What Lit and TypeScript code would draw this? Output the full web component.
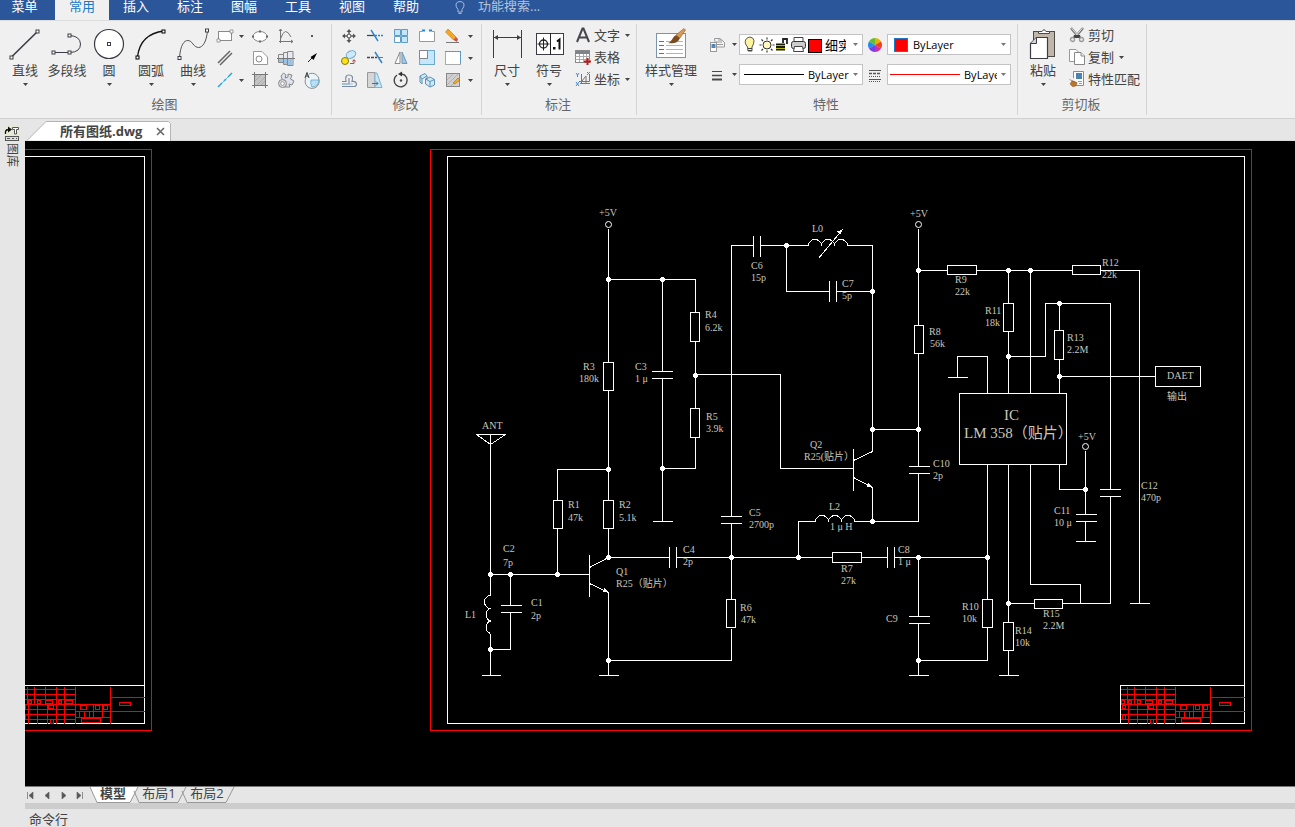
import { LitElement, html, svg, css } from "lit";
import { customElement, state } from "lit/decorators.js";
import { classMap } from "lit/directives/class-map.js";

const INK = "#3c3c46";

/* ---------- icon artwork ---------- */

const node = (x: number, y: number, c = INK) =>
  svg`<rect x=${x - 1.5} y=${y - 1.5} width="3" height="3" fill="#fff" stroke=${c}></rect>`;

const big: Record<string, unknown> = {
  line: svg`<path d="M3 28.5L29 3" stroke=${INK} stroke-width="1.6"/>${node(2.5, 29.5)}${node(28.5, 3.5)}`,
  polyline: svg`<path d="M2.5 24.500H19Q29.500 24 29.500 16Q29 8 18.500 7.500" fill="none" stroke=${INK}/>${node(2.5, 24.5)}${node(18.5, 24.5)}${node(18.5, 7.5)}`,
  circle: svg`<circle cx="16" cy="16" r="14.500" fill="#fff" stroke=${INK} stroke-width="1.200"/>${node(16, 16)}`,
  arc: svg`<path d="M2.500 29Q5 6 29 3" fill="none" stroke="#111" stroke-width="1.300"/>${node(2.5, 29.5, "#000")}${node(28.5, 3.5, "#000")}`,
  curve: svg`<path d="M2.500 29.500C4 10 12 10 16 16C21 23 29 20 30.500 2.500" fill="none" stroke="#555"/>${node(2.5, 30)}${node(30, 2.5)}`,
  dimension: svg`<path d="M2.500 2V30M30.500 2V30M3 9.500H30" stroke=${INK} fill="none"/><path d="M3 9.500l4-2.500v5zM30 9.500l-4-2.500v5z" fill=${INK}/>`,
  symbol: svg`<rect x="3.500" y="5.500" width="27" height="21" fill="#fff" stroke=${INK}/><path d="M17.500 5V27M4.500 16H16.500M10.500 9.500V22.500" stroke="#222"/><circle cx="10.500" cy="16" r="4" fill="none" stroke="#222" stroke-width="1.300"/><rect x="20" y="19" width="2.500" height="2.500" fill="#111"/><path d="M24 13.500L26.500 11.500V21.500" fill="none" stroke="#111" stroke-width="2"/>`,
  style: svg`<rect x="1.500" y="5.500" width="29" height="24" fill="#fff" stroke="#7b93ad"/><path d="M4 13.500h5M4 17.500h5M4 21.500h5M4 25.500h5" stroke="#5674a0"/><path d="M11 13.500h17M11 17.500h17M11 21.500h17M11 25.500h17" stroke="#a9b5cf"/><path d="M13 15C17 14 17 9 21 7L25 10C23 15 18 16 13 15z" fill="#7c4a1c"/><path d="M21 7L29 0.500L30.500 2L25 10z" fill="#d99a56" stroke="#8a5a2a" stroke-width=".6"/>`,
  paste: svg`<rect x="6.500" y="3.500" width="21" height="25" fill="#c0b7aa" stroke="#4a4a4a"/><path d="M11.500 5.500V3.500H15Q17 0 19 3.500H22.500V5.500z" fill="#fff" stroke="#4a4a4a"/><path d="M9.500 9.500H20.500V30.500H3.500V15.500z" fill="#fff" stroke=${INK} stroke-width="1.200"/><path d="M9.500 9.500V15.500H3.500" fill="#d4d4d4" stroke=${INK}/>`,
};

const small: Record<string, unknown> = {
  rect: svg`<rect x="2.500" y="4.500" width="13" height="9" fill="#fff" stroke="#8a8a8a"/><path d="M1 12h3v3H1zM14 3h3v3h-3z" fill="#fff" stroke="#777" stroke-width=".7"/>`,
  ellipse: svg`<ellipse cx="9" cy="9.500" rx="7" ry="5" fill="#fff" stroke="#888"/><path d="M8 3.500h2v2H8zM1 8.500h2v2H1zM15 8.500h2v2h-2zM8 13.500h2v2H8z" fill="#666"/>`,
  graph: svg`<path d="M3.500 2V16M2 14.500H16M3.500 12Q8 -2 14 10M2 4l1.500-2L5 4M14 13l2 1.500-2 1.500" fill="none" stroke="#777"/>`,
  dot: svg`<rect x="8" y="8" width="2" height="2" fill="#555"/>`,
  dblline: svg`<path d="M2 14L14 2M4 16L16 4" stroke="#666" stroke-width="1.500"/>`,
  sheet: svg`<path d="M2.500 2.500H11L16.500 8V15.500H2.500z" fill="#fff" stroke="#999"/><circle cx="8" cy="10" r="3" fill="#fff" stroke="#888"/>`,
  shaft: svg`<path d="M1.500 5.500h5v8h-5zM6.500 3.500h4v12h-4zM10.500 2.500h5.500v14h-5.500z" fill="#e7eaf0" stroke="#888"/><path d="M2 10h4v3H2zM7 10h3v5H7zM11 10h4.500v6H11z" fill="#9cc3e6"/><path d="M0 9.500H18" stroke="#777"/>`,
  arrow: svg`<path d="M5 13L12 6" stroke="#222"/><path d="M14 4L7.500 8L10.500 11z" fill="#000"/>`,
  center: svg`<path d="M2 16L6 12M8 10L10 8M12 6L16 2" stroke="#29a6dc" stroke-width="1.500"/><path d="M6 12L8 10M10 8L12 6" stroke="#29a6dc" stroke-width=".7"/>`,
  hatch: svg`<rect x="3.500" y="3.500" width="11" height="11" fill="#c4c4c4"/><path d="M4 10l6-6M6 14l8-8M4 6l2-2M10 14l4-4" stroke="#a2a2a2" stroke-width=".8"/><path d="M3.500 1V17M14.500 1V17M1 3.500H17M1 14.500H17" stroke="#777"/>`,
  gear: svg`<path d="M5 8L4 5L6.500 2L9 4L8 7L11 6V3L15 4L13.500 8L17 10L15 14L12 13L13 16H7L9 13" fill="#dce3ee" stroke="#888"/><circle cx="5.500" cy="12.500" r="4" fill="#dcdcdc" stroke="#888"/><circle cx="5.500" cy="12.500" r="1.800" fill="#fff" stroke="#999"/>`,
  detail: svg`<path d="M6 3A7 7 0 0 1 16 9A7 7 0 1 1 3 7" fill="#eaf5fb" stroke="#888"/><path d="M8 9H16Q15 16 9 16Q7 13 8 9z" fill="#b9e1f5" stroke="#5a9ac0" stroke-width=".7"/><path d="M2 7L4 1.500L6 7M3 5H5" fill="none" stroke="#333"/>`,
  move: svg`<path d="M9 4V7M9 11V14M4 9H7M11 9H14" stroke="#555" stroke-width="1.500"/><path d="M9 2l2.500 3h-5zM9 16l2.500-3h-5zM2 9l3-2.500v5zM16 9l-3-2.500v5z" fill="#555"/><rect x="7.500" y="7.500" width="3" height="3" fill="#fff" stroke="#777"/>`,
  trim: svg`<path d="M1 8.500H8" stroke="#444" stroke-width="1.300"/><path d="M9 8.500H17" stroke="#2c86c9" stroke-width="1.300" stroke-dasharray="2 1"/><path d="M5 3L12 14" stroke="#2c86c9" stroke-width="1.400"/>`,
  array: svg`<path d="M2.500 2.500h6v6h-6zM9.500 2.500h6v6h-6zM9.500 9.500h6v6h-6z" fill="#c4e6fa" stroke="#5f9dc8"/><path d="M2.500 9.500h6v6h-6z" fill="#fff" stroke="#5f9dc8"/>`,
  stretch: svg`<path d="M4 4.500H1.500V14.500H16.500V4.500H14" fill="#fff" stroke="#999"/><path d="M4 3.500h3M11 3.500h3" stroke="#2c86c9" stroke-width="2"/>`,
  eraser: svg`<path d="M1.500 5L4 2L12 10L9.500 13z" fill="#f5a623" stroke="#b87817" stroke-width=".6"/><path d="M9.500 13L12 10L14 12L13 15z" fill="#c9534f"/><path d="M2 15.500H15" stroke="#777"/>`,
  copy: svg`<ellipse cx="11" cy="5.500" rx="5" ry="3.500" transform="rotate(-25 11 5.500)" fill="#cdeafa" stroke="#6aa5cc"/><circle cx="5" cy="12" r="3.500" fill="#fbe21c" stroke="#8a7a00"/><path d="M10 14.500H14V11M12.500 12.500l1.500-2l1.500 2" fill="none" stroke="#b04a3a"/>`,
  extend: svg`<path d="M1 8.500H11" stroke="#444" stroke-dasharray="3 1" stroke-width="1.300"/><path d="M9 3L16 14" stroke="#2c86c9" stroke-width="1.500"/><path d="M12 8.500H17" stroke="#2c86c9"/>`,
  mirror: svg`<path d="M8 3V14.500H3z" fill="#fff" stroke="#888"/><path d="M10 3V14.500H15z" fill="#9bc7e8" stroke="#6d98b8"/>`,
  scale: svg`<rect x="1.500" y="1.500" width="15" height="14" fill="#c4e8fb" stroke="#6fa9cc"/><rect x="1.500" y="1.500" width="8" height="8" fill="#fff" stroke="#888"/>`,
  select: svg`<rect x="1.500" y="2.500" width="15" height="13" fill="#fff" stroke="#aaa"/><path d="M1.500 2.500H16.500V15" fill="none" stroke="#3c93cc" stroke-dasharray="2 1"/>`,
  offset: svg`<path d="M2 15.500H14Q16.500 15.500 16.500 13Q16 10 12 10.500Q14 4 9 4Q4.500 4 6 10.500H2M2 13H9V7" fill="none" stroke="#7c8aa0" stroke-width="1.200"/><path d="M2 13H13" stroke="#8cc4e8"/>`,
  chamfer: svg`<path d="M1.500 1.500H9V16.500H1.500z" fill="#d6d6d6" stroke="#999"/><path d="M9 2H11L16 16.500H9z" fill="#c4e8fb" stroke="#7ab3d3"/><path d="M6 12.500H12M10 10.500l2 2l-2 2" fill="none" stroke="#666"/>`,
  rotate: svg`<path d="M10 3A6.500 6.500 0 1 1 5 4" fill="none" stroke="#444" stroke-width="1.400"/><path d="M10 0.500V5.500L6 3z" fill="#333"/><circle cx="9" cy="9.500" r="1.200" fill="#444"/>`,
  block: svg`<path d="M2 5L7 2.500L9 5L4 8zM2 5V11L4 13V8M9 5V9M7.500 8L12 6L16.500 8.500V14L12 16L7.500 13z" fill="#cfe9f8" stroke="#5a93b8"/><path d="M7.500 8L12 10.500L16.500 8.500M12 10.500V16" fill="none" stroke="#5a93b8"/>`,
  edit: svg`<rect x="2.500" y="2.500" width="13" height="13" fill="#d0d0d0" stroke="#888"/><path d="M3 9l6-6M3 14l11-11M7 15l8-8" stroke="#b0b0b0"/><path d="M9 12L14 7L16 9L11 13z" fill="#f0a831" stroke="#8f6417" stroke-width=".5"/>`,
  letter: svg`<path d="M3 16L8.500 2.500H9.500L15 16M5 11.500H13" fill="none" stroke="#46464e" stroke-width="2"/>`,
  table: svg`<rect x="1.500" y="2.500" width="14" height="12" fill="#fff" stroke="#888"/><path d="M1.500 3h14v3h-14z" fill="#7e848e"/><path d="M1.500 8.500h14M1.500 11.500h14M5.500 6v8M9.500 6v8M12.500 6v8" stroke="#aaa"/><path d="M13.500 10V17M10 13.500H17" stroke="#b81c1c" stroke-width="2"/>`,
  coord: svg`<path d="M7.500 4V14M5 11.500H15.500V5M8 11L12 6V14M6 13.500H16" fill="none" stroke="#777"/><path d="M2 3l1.500 2L5 3M3.500 5v2M13 2l3 3M16 2l-3 3M2 12l3 4M5 12l-3 4" fill="none" stroke="#3f87c7"/>`,
  layers: svg`<path d="M6.500 2.500H12L16.500 6.500V11H8z" fill="#f4f4f4" stroke="#999"/><path d="M8 6h6M9 8.500h6M10 4h4" stroke="#999"/><rect x="2.500" y="6.500" width="6" height="9" fill="#fff" stroke="#999"/><rect x="3.500" y="8" width="4" height="4" fill="#4d86b8"/>`,
  weight: svg`<path d="M4 5.500H14" stroke="#4a4a4a"/><path d="M4 9.500H14" stroke="#4a4a4a" stroke-width="1.500"/><path d="M4 13.500H14" stroke="#4a4a4a" stroke-width="2"/>`,
  wheel: svg`<circle cx="9" cy="9" r="7" fill="#ddd"/><path d="M9 9V2A7 7 0 0 1 15 5.500z" fill="#f0b000"/><path d="M9 9L15 5.500A7 7 0 0 1 15 12.500z" fill="#f04020"/><path d="M9 9L15 12.500A7 7 0 0 1 9 16z" fill="#d030a0"/><path d="M9 9V16A7 7 0 0 1 3 12.500z" fill="#7a3cf0"/><path d="M9 9L3 12.500A7 7 0 0 1 3 5.500z" fill="#1e8cf0"/><path d="M9 9L3 5.500A7 7 0 0 1 9 2z" fill="#60c030"/>`,
  linetype: svg`<path d="M3 4.500H15M3 13.500H15" stroke="#555"/><path d="M3 7.500H15" stroke="#555" stroke-width="1.500" stroke-dasharray="3 1"/><path d="M3 10.500H15M3 15.500H15" stroke="#555" stroke-dasharray="1 1"/>`,
  cut: svg`<path d="M3 2L11 11.500M15 2L7 11.500" stroke="#777" stroke-width="2.500"/><path d="M3.500 2L11 11M14.500 2L7 11" stroke="#fff" stroke-width=".8"/><path d="M6 9h6l1 3H5z" fill="#444"/><circle cx="4.500" cy="13.500" r="2" fill="#eee" stroke="#999" stroke-width="1.300"/><circle cx="13.500" cy="13.500" r="2" fill="#eee" stroke="#999" stroke-width="1.300"/>`,
  pages: svg`<path d="M1.500 1.500H8L11.500 5V13.500H1.500z" fill="#fff" stroke="#999"/><path d="M6.500 4.500H13L16.500 8V16.500H6.500z" fill="#fff" stroke="#888"/><path d="M13 4.500V8H16.500" fill="#eee" stroke="#888"/>`,
  match: svg`<path d="M5.500 1.500H15.500V15.500H8M5.500 1.500V8" fill="#fff" stroke="#8a8a8a"/><rect x="8" y="3" width="6" height="6" fill="#4b83b3"/><path d="M10 11.500h4M11 13.500h3" stroke="#999"/><path d="M1.500 9.500L7 12M2 14L4 11L9 12.500Q9 17 4.500 16.500z" fill="#bd7428" stroke="#8a5a2a" stroke-width=".6"/>`,
};

const bigIcon = (n: string) =>
  html`<svg class="big-icon" viewBox="0 0 32 32" aria-hidden="true">${big[n]}</svg>`;
const smallIcon = (n: string) =>
  html`<svg class="small-icon" viewBox="0 0 18 18" aria-hidden="true">${small[n]}</svg>`;
const caret = html`<svg class="caret" viewBox="0 0 5 3" aria-hidden="true"><path d="M0 0H5L2.500 3z" fill="currentColor"/></svg>`;

/* ---------- drawing sheet data ---------- */

const WIRES = [
  // supply rail, bias network
  "M608 228V362M608 390V500M608 528V557M608 279H695V312M695 341V408M695 437V468H662",
  "M662 279V371M662 378V521M652 521H672M651 371H672M651 378H672",
  "M695 374H780V468H853M608 469H557V500M557 528V574",
  // antenna and input tank
  "M476 434H505L490 444L476 434M490 434V595M490 633V675M481 675H500M490 574H589",
  "M510 574V605M510 612V649H490M500 605H521M500 612H521",
  // first transistor
  "M589 554V596M589 567L608 557M589 583L608 592V675M598 675H618M608 660H731V628",
  "M608 557H669M669 546V567M676 546V567M676 557H832M731 557V599M731 557V523M720 523H741M720 516H741M731 516V245H753",
  // oscillator tank
  "M753 235V256M760 235V256M760 245H808M847 245H872V451L853 460M786 245V291H829M829 280V301M836 280V301M836 291H872",
  "M853 448V490M853 477L872 487V521M854 521H918V473M815 521H798V557M818 258L842 229",
  "M872 429H918M918 228V325M918 353V466M908 466H929M908 473H929",
  "M861 557H887M887 546V567M894 546V567M894 557H987M918 557V616M908 616H929M908 623H929M918 623V675M908 675H928M918 660H987V627",
  // amplifier
  "M918 270H947M976 270H1072M1100 270H1139V603M1129 603H1149M1008 270V303M1008 331V393M1030 270V393",
  "M1008 356H1045V303H1110V489M1059 303V330M1059 359V393M1059 376H1155M947 377H967M957 377V356H987V393",
  "M987 464V599M1008 464V622M1008 650V675M998 675H1018M1030 464V584H1080V603M1008 603H1034M1062 603H1110V496",
  "M1059 464V489H1085M1085 450V514M1075 514H1096M1075 521H1096M1085 521V541M1075 541H1095M1099 489H1120M1099 496H1120",
];

const COILS =
  "M490 595a6 6.500 0 0 0 0 13a6 6.500 0 0 0 0 12.500a6 6.500 0 0 0 0 12.500" +
  "M808 245a6.500 6 0 0 1 13 0a6.500 6 0 0 1 13 0a6.500 6 0 0 1 13 0" +
  "M815 521a6.500 6 0 0 1 13 0a6.500 6 0 0 1 13 0a6.500 6 0 0 1 13 0";

const BOXES: number[][] = [
  [690, 312, 9, 29], [690, 408, 9, 29], [603, 362, 10, 28], [603, 500, 10, 28], [553, 500, 9, 28],
  [726, 599, 9, 28], [914, 325, 9, 28], [832, 552, 29, 10], [947, 265, 29, 9], [1072, 265, 28, 9],
  [1003, 303, 10, 28], [1054, 330, 9, 29], [982, 599, 10, 28], [1003, 622, 10, 28], [1034, 599, 28, 9],
  [959, 393, 107, 71], [1155, 366, 45, 20],
];

const DOTS: number[][] = [
  [608, 279], [662, 279], [695, 375], [662, 468], [608, 469], [608, 557], [490, 574], [510, 574], [557, 574],
  [490, 649], [608, 660], [731, 557], [786, 245], [872, 291], [872, 429], [918, 429], [918, 270], [872, 521],
  [798, 557], [918, 557], [987, 557], [918, 660], [1008, 270], [1030, 270], [1008, 356], [1059, 303],
  [1059, 376], [1085, 489], [1008, 603],
];

const TERMINALS: number[][] = [[608, 224], [918, 224], [1085, 446]];

const LABELS: [number, number, string][] = [
  [600, 216, "+5V"], [706, 318, "R4"], [706, 331, "6.2k"], [584, 370, "R3"], [580, 382, "180k"],
  [636, 370, "C3"], [636, 382, "1 μ"], [483, 429, "ANT"], [707, 420, "R5"], [707, 432, "3.9k"],
  [504, 552, "C2"], [504, 566, "7p"], [569, 508, "R1"], [569, 521, "47k"], [620, 508, "R2"],
  [620, 521, "5.1k"], [750, 516, "C5"], [750, 528, "2700p"], [684, 553, "C4"], [684, 565, "2p"],
  [617, 575, "Q1"], [617, 587, "R25（贴片）"], [466, 618, "L1"], [532, 606, "C1"], [532, 619, "2p"],
  [741, 611, "R6"], [742, 623, "47k"], [813, 232, "L0"], [752, 269, "C6"], [752, 281, "15p"],
  [843, 287, "C7"], [843, 299, "5p"], [911, 217, "+5V"], [930, 335, "R8"], [931, 347, "56k"],
  [956, 283, "R9"], [956, 295, "22k"], [986, 314, "R11"], [986, 326, "18k"], [1103, 266, "R12"],
  [1103, 278, "22k"], [1068, 341, "R13"], [1068, 353, "2.2M"], [1168, 400, "输出"], [1079, 440, "+5V"],
  [1142, 489, "C12"], [1142, 501, "470p"], [1055, 514, "C11"], [1055, 526, "10 μ"], [811, 448, "Q2"],
  [805, 460, "R25(贴片）"], [830, 510, "L2"], [831, 530, "1 μ H"], [899, 553, "C8"], [899, 565, "1 μ"],
  [842, 572, "R7"], [842, 584, "27k"], [887, 622, "C9"], [963, 610, "R10"], [963, 622, "10k"],
  [1016, 634, "R14"], [1016, 646, "10k"], [1044, 617, "R15"], [1044, 629, "2.2M"], [934, 467, "C10"],
  [934, 479, "2p"],
];

const TITLE_GRID =
  "M20 689H75M20 694H75M20 699H75M20 704H110M20 709H75M20 714H75M20 719H75" +
  "M27 686V704M34 686V704M45 686V704M56 686V723M64 686V723M75 686V723M28 704V723M37 704V723M47 704V723" +
  "M75 711H110M75 717H110M79 711V717M84 711V717M89 711V717M93 704V717M102 704V717M110 686V723" +
  "M110 697H144M110 711H144" +
  "M21 700h3v3h-3zM28 700h3v3h-3zM37 700h3v3h-3zM45 700h7v3h-7zM58 700h3v3h-3zM65 700h7v3h-7z" +
  "M22 705h3v3h-3zM48 705h5v3h-5zM80 705h6v4h-6zM95 705h4v4h-4zM103 705h4v4h-4z" +
  "M22 715h3v4h-3zM50 719h3v4h-3zM81 718h19v4h-19zM119 702h11v3h-11z";

const titleBlock = (dx: number) => svg`
  <g transform="translate(${dx} 0)">
    <path class="sheet" d="M20 723V685H144"/>
    <path class="red" d=${TITLE_GRID}/>
  </g>`;

@customElement("cad-canvas")
export class CadCanvas extends LitElement {
  static styles = css`
    :host { display: block; flex: 1; min-height: 0; background: #000; overflow: hidden; }
    svg { display: block; width: 100%; height: 100%; }
    .wire, .sheet, .red { fill: none; stroke: #fff; stroke-width: 1; shape-rendering: crispEdges; }
    .red { stroke: #f00; }
    .body { fill: #000; }
    .solid { fill: #fff; shape-rendering: crispEdges; }
    .terminal { fill: #000; stroke: #fff; }
    text {
      fill: #c8c8bc;
      font: 10px "Liberation Serif", "Noto Sans CJK SC", serif;
    }
    .large { font-size: 15px; }
  `;

  render() {
    return html`
      <svg role="img" aria-label="所有图纸">
        <g transform="translate(-24.500 -140.500)">
          <path class="red" d="M20 149H151V730H20M430 149H1251V730H430z"/>
          <path class="sheet" d="M20 156H144V723H20M447 156H1244V723H447z"/>
          ${titleBlock(0)}${titleBlock(1100)}
          ${WIRES.map((d) => svg`<path class="wire" d=${d}/>`)}
          <path class="wire" d=${COILS}/>
          ${BOXES.map(([x, y, w, h]) => svg`<rect class="wire body" x=${x} y=${y} width=${w} height=${h}/>`)}
          ${DOTS.map(([x, y]) => svg`<circle class="solid" cx=${x} cy=${y} r="2.500"/>`)}
          ${TERMINALS.map(([x, y]) => svg`<circle class="terminal" cx=${x} cy=${y} r="3"/>`)}
          <path class="solid" d="M608 592l-6-1l2-4zM872 487l-6-1l2-4zM842 229l-2 5l-4-3z"/>
        </g>
        <g transform="translate(-26 -141)">
          ${LABELS.map(([x, y, t]) => svg`<text x=${x} y=${y}>${t}</text>`)}
          <text x="1168" y="379">DAET</text>
          <text class="large" x="1005" y="420">IC</text>
          <text class="large" x="965" y="438">LM 358（贴片）</text>
        </g>
      </svg>`;
  }
}

@customElement("app-root")
export class AppRoot extends LitElement {
  @state() private menu = "常用";
  @state() private layout = "模型";

  static styles = css`
    :host {
      display: flex;
      flex-direction: column;
      height: 100vh;
      overflow: hidden;
      background: #e6e6e6;
      color: #444;
      font: 13px/16px "Open Sans", "Noto Sans CJK SC", sans-serif;
    }
    * { box-sizing: border-box; }
    button {
      border: 0;
      margin: 0;
      padding: 0;
      background: none;
      color: inherit;
      font: inherit;
      white-space: nowrap;
    }
    svg { display: block; flex: none; }

    .menubar { display: flex; flex: none; height: 20px; background: #2b579a; color: #fff; }
    .menubar button { width: 54px; height: 20px; line-height: 12px; padding-bottom: 8px; }
    .menubar button:first-child { width: 55px; padding-right: 6px; }
    .menubar button.active { background: #f0f0f0; color: #1979ca; }
    .search { display: flex; align-items: flex-start; margin-left: 19px; gap: 10px; color: #b5c3da; }
    .search input {
      width: 160px; height: 12px; border: 0; padding: 0; background: none;
      color: inherit; font: inherit; line-height: 12px; overflow: visible;
    }
    .search input::placeholder { color: #b5c3da; opacity: 1; }
    .bulb { width: 16px; height: 16px; }

    .ribbon {
      display: flex; flex: none; height: 99px; padding: 3px 0;
      background: #f0f0f0; border-top: 1px solid #dcdcdc; border-bottom: 1px solid #d0d0d0;
    }
    .group { display: flex; flex-direction: column; justify-content: space-between; border-right: 1px solid #d4d4d4; padding: 0 6px 3px 4px; }
    .group h2 { margin: 0; font: inherit; line-height: 16px; text-align: center; color: #666; }
    .tools { display: flex; }
    .big { display: flex; flex-direction: column; align-items: center; width: 42px; padding-top: 4px; }
    .big.wide { width: 60px; }
    .big span { margin-top: 1px; line-height: 18px; }
    .big .caret { margin-top: 4px; }
    .big-icon { width: 32px; height: 32px; }
    .small-icon { width: 18px; height: 18px; }
    .caret { width: 5px; height: 3px; color: #444; }
    .grid { display: grid; grid-auto-rows: 22px; place-items: center; padding-top: 1px; }
    .draw { grid-template-columns: 22px 11px repeat(3, 26px); }
    .modify { grid-template-columns: repeat(5, 26px) 9px; }
    .list { display: grid; grid-auto-rows: 22px; align-items: center; padding-left: 4px; }
    .list button { display: flex; align-items: center; gap: 2px; }
    .list .caret { margin-left: 3px; }
    .props { display: grid; grid-template-columns: 34px 124px 24px 124px; row-gap: 9px; align-content: start; align-items: center; padding: 10px 0 0 4px; }
    .props > svg { justify-self: center; }
    .pick { display: flex; align-items: center; justify-content: center; gap: 6px; }
    .combo {
      display: flex; align-items: center; height: 21px; padding: 0 4px 0 2px;
      border: 1px solid #c3c3c3; background: #fff; color: #000;
    }
    .combo select {
      appearance: none; flex: 1; min-width: 0; height: 19px; border: 0; margin: 0; padding: 0;
      background: none; color: inherit; font: inherit; font-size: 11px; overflow: hidden; text-overflow: clip;
    }
    .combo .caret { color: #777; margin-left: 4px; }
    .combo.layer .caret { margin-left: 7px; }
    .combo.layer select { font-size: 13px; }
    .state-icons { width: 82px; height: 19px; margin-right: 1px; }
    .swatch { width: 12px; height: 12px; margin: 0 6px 0 5px; background: #f00; outline: 1px solid #1979ca; }
    .stroke { width: 60px; height: 1px; margin: 0 4px 0 2px; background: #000; }
    .stroke.red { width: 70px; margin-left: 0; background: #f00; }

    .workspace { display: flex; flex: 1; min-height: 0; }
    .side { flex: none; width: 25px; padding: 7px 0 0 4px; }
    .side button { display: flex; flex-direction: column; align-items: center; width: 16px; gap: 1px; font-size: 12px; line-height: 16px; }
    .side span { writing-mode: vertical-rl; text-orientation: sideways; }
    .dock { width: 16px; height: 16px; }
    .main { display: flex; flex-direction: column; flex: 1; min-width: 0; }
    .files { flex: none; height: 22px; padding: 2px 0 0 2px; border-bottom: 1px solid #d8dcd8; }
    .file { display: grid; width: 144px; height: 19px; }
    .file > * { grid-area: 1 / 1; }
    .shape { width: 144px; height: 20px; }
    .caption { display: flex; align-items: center; justify-content: space-between; padding: 0 5px 0 33px; font-weight: 700; }
    .close { width: 10px; height: 16px; display: flex; align-items: center; }

    .layouts { display: flex; flex: none; height: 17px; border-top: 1px solid #777; color: #555; }
    .steps { display: flex; padding-right: 1px; }
    .step { width: 16px; height: 16px; }
    .step svg { width: 16px; height: 16px; }
    .tab { display: grid; width: 48px; height: 16px; color: #444; }
    .tab > * { grid-area: 1 / 1; }
    .tab svg { width: 48px; height: 17px; overflow: visible; }
    .tab span { line-height: 13px; padding-right: 6px; }
    .tab.active { font-weight: 700; }
    .tab.active span { padding-right: 2px; }
    .splitter { flex: none; height: 6px; background: #cdcdcd; }
    .command { display: block; flex: none; height: 18px; padding: 2px 4px 0; }
  `;

  private bigButton(icon: string, label: string, opts: { arrow?: boolean; wide?: boolean } = {}) {
    return html`<button class=${classMap({ big: true, wide: !!opts.wide })}>
      ${bigIcon(icon)}<span>${label}</span>${opts.arrow === false ? "" : caret}
    </button>`;
  }

  private cell(icon: string) {
    return icon === "-"
      ? html`<span></span>`
      : icon === "v"
        ? html`<button aria-label="更多">${caret}</button>`
        : html`<button aria-label=${icon}>${smallIcon(icon)}</button>`;
  }

  private listButton(icon: string, label: string, arrow: boolean) {
    return html`<button>${smallIcon(icon)}<span>${label}</span>${arrow ? caret : ""}</button>`;
  }

  render() {
    const menus = ["菜单", "常用", "插入", "标注", "图幅", "工具", "视图", "帮助"];
    const draw = ["rect", "v", "ellipse", "graph", "dot", "dblline", "-", "sheet", "shaft", "arrow", "center", "v", "hatch", "gear", "detail"];
    const modify = ["move", "trim", "array", "stretch", "eraser", "v", "copy", "extend", "mirror", "scale", "select", "v", "offset", "chamfer", "rotate", "block", "edit", "v"];
    const steps: [string, string][] = [
      ["首个", "M2.500 5V12M8 5V12L4 8.500z"],
      ["上一个", "M8 5V12L4 8.500z"],
      ["下一个", "M5 5V12L9 8.500z"],
      ["末个", "M4 5V12L8 8.500zM9.500 5V12"],
    ];
    return html`
      <nav class="menubar">
        ${menus.map((m) => html`<button class=${classMap({ active: m === this.menu })} @click=${() => (this.menu = m)}>${m}</button>`)}
        <label class="search">
          <svg class="bulb" viewBox="0 0 16 16" aria-hidden="true"><path d="M6 9.500Q3.500 7 4 4Q5 1.500 8 1.500Q11 1.500 12 4Q12.500 7 10 9.500V12H6zM6.500 13.500H9.500" fill="none" stroke="#a9bad6"/></svg>
          <input type="text" placeholder="功能搜索..." aria-label="功能搜索">
        </label>
      </nav>

      <header class="ribbon">
        <section class="group">
          <div class="tools">
            ${this.bigButton("line", "直线")}
            ${this.bigButton("polyline", "多段线", { arrow: false })}
            ${this.bigButton("circle", "圆")}
            ${this.bigButton("arc", "圆弧")}
            ${this.bigButton("curve", "曲线")}
            <div class="grid draw">${draw.map((i) => this.cell(i))}</div>
          </div>
          <h2>绘图</h2>
        </section>
        <section class="group">
          <div class="tools"><div class="grid modify">${modify.map((i) => this.cell(i))}</div></div>
          <h2>修改</h2>
        </section>
        <section class="group">
          <div class="tools">
            ${this.bigButton("dimension", "尺寸")}
            ${this.bigButton("symbol", "符号")}
            <div class="list">
              ${this.listButton("letter", "文字", true)}
              ${this.listButton("table", "表格", false)}
              ${this.listButton("coord", "坐标", true)}
            </div>
          </div>
          <h2>标注</h2>
        </section>
        <section class="group">
          <div class="tools">
            ${this.bigButton("style", "样式管理", { wide: true })}
            <div class="props">
              <button class="pick" aria-label="图层">${smallIcon("layers")}${caret}</button>
              <div class="combo layer">
                <svg class="state-icons" viewBox="0 0 82 19" aria-hidden="true">
                  <path d="M5.500 12C3 9 3 7 3.500 5Q5 2 8 2Q11.500 2.500 12 5.500Q12 9 10 12V16H6z" fill="#fdf3a0" stroke="#555"/><path d="M6 13.500h4M6 15.500h4" stroke="#444"/>
                  <circle cx="25" cy="10" r="4" fill="#fff6c0" stroke="#333"/><path d="M25 2.500v2M25 15.500v2M17.500 10h2M30.500 10h2M19.500 4.500l1.500 1.500M29 14l1.500 1.500M30.500 4.500L29 6M21 14l-1.500 1.500" stroke="#333" stroke-width="1.200"/>
                  <path d="M34 8.500h9v7h-9z" fill="#1b1b00"/><path d="M34 10.500h9M34 13.500h9" stroke="#b9b900"/><path d="M41 8V4h4v5" fill="none" stroke="#222" stroke-width="1.800"/>
                  <path d="M52 7V2.500h9V7" fill="#fff" stroke="#444"/><rect x="49.500" y="6.500" width="14" height="7" rx="2" fill="#ccc" stroke="#333"/><path d="M52.500 11.500h8l1 5h-10z" fill="#fff" stroke="#444"/>
                  <rect x="66.500" y="4.500" width="13" height="13" fill="#f00" stroke="#000"/>
                </svg>
                <select aria-label="当前图层"><option>细实线层</option></select>${caret}
              </div>
              ${smallIcon("wheel")}
              <div class="combo">
                <span class="swatch"></span>
                <select aria-label="颜色"><option>ByLayer</option></select>${caret}
              </div>
              <button class="pick" aria-label="线宽">${smallIcon("weight")}${caret}</button>
              <div class="combo">
                <span class="stroke"></span>
                <select aria-label="线宽值"><option>ByLayer</option></select>${caret}
              </div>
              ${smallIcon("linetype")}
              <div class="combo">
                <span class="stroke red"></span>
                <select aria-label="线型"><option>ByLayer</option></select>${caret}
              </div>
            </div>
          </div>
          <h2>特性</h2>
        </section>
        <section class="group">
          <div class="tools">
            ${this.bigButton("paste", "粘贴")}
            <div class="list">
              ${this.listButton("cut", "剪切", false)}
              ${this.listButton("pages", "复制", true)}
              ${this.listButton("match", "特性匹配", false)}
            </div>
          </div>
          <h2>剪切板</h2>
        </section>
      </header>

      <div class="workspace">
        <aside class="side">
          <button>
            <svg class="dock" viewBox="0 0 16 16" aria-hidden="true"><path d="M0 0H16V9H0z" fill="#e8ead8"/><path d="M1.500 8V5.500Q2 3.500 5 3.500" fill="none" stroke="#111" stroke-width="1.300"/><path d="M4 0.500L8 3.500L4 6.500z" fill="#111"/><path d="M8.500 1.500h6v2h-2V8h-2V3.500h-2z" fill="#fff" stroke="#555"/><rect x="1.500" y="10.500" width="13" height="4" fill="#ddd" stroke="#555"/><path d="M3 12.500h3M8 12.500h2M12 12.500h1" stroke="#555"/></svg>
            <span>图库</span>
          </button>
        </aside>
        <main class="main">
          <div class="files">
            <div class="file">
              <svg class="shape" viewBox="0 0 144 20" aria-hidden="true"><path d="M0 19.500L19 0.500H141.500L143.500 2.500V20" fill="#fff" stroke="#b4b4b4"/></svg>
              <div class="caption">
                <span>所有图纸.dwg</span>
                <button class="close" aria-label="关闭"><svg width="9" height="9" viewBox="0 0 9 9"><path d="M1 1L8 8M8 1L1 8" stroke="#666" stroke-width="1.500"/></svg></button>
              </div>
            </div>
          </div>
          <cad-canvas></cad-canvas>
          <div class="layouts">
            <div class="steps">
              ${steps.map(([name, d]) => html`<button class="step" aria-label=${name}><svg viewBox="0 0 16 16"><path d=${d} fill="#555" stroke="#666" stroke-width=".7"/></svg></button>`)}
            </div>
            ${["模型", "布局1", "布局2"].map((t, i) => html`
              <button class=${classMap({ tab: true, active: t === this.layout })} @click=${() => (this.layout = t)}>
                <svg viewBox="0 0 48 17" aria-hidden="true">
                  <path d=${i === 0 ? "M0 0L7 15.500H40L48 0" : "M-4 4L1 15.500H40L48 0"} fill=${t === this.layout ? "#fff" : "none"} stroke="#999"/>
                </svg>
                <span>${t}</span>
              </button>`)}
          </div>
          <div class="splitter"></div>
          <div class="command">命令行</div>
        </main>
      </div>`;
  }
}
